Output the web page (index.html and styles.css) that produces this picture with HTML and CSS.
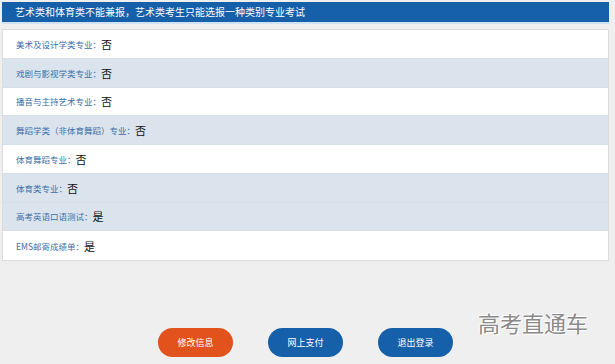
FILE: index.html
```html
<!DOCTYPE html>
<html lang="zh-CN">
<head>
    <meta charset="UTF-8">
    <meta name="viewport" content="width=device-width, initial-scale=1.0">
    <title>报考信息确认</title>
    <link rel="stylesheet" href="styles.css">
</head>
<body>
    <div class="notice">艺术类和体育类不能兼报，艺术类考生只能选报一种类别专业考试</div>

    <ul class="info-list">
        <li class="row"><span class="label">美术及设计学类专业：</span><span class="value">否</span></li>
        <li class="row alt"><span class="label">戏剧与影视学类专业：</span><span class="value">否</span></li>
        <li class="row"><span class="label">播音与主持艺术专业：</span><span class="value">否</span></li>
        <li class="row alt"><span class="label">舞蹈学类（非体育舞蹈）专业：</span><span class="value">否</span></li>
        <li class="row"><span class="label">体育舞蹈专业：</span><span class="value">否</span></li>
        <li class="row alt"><span class="label">体育类专业：</span><span class="value">否</span></li>
        <li class="row alt"><span class="label">高考英语口语测试：</span><span class="value">是</span></li>
        <li class="row"><span class="label">EMS邮寄成绩单：</span><span class="value">是</span></li>
    </ul>

    <div class="actions">
        <button class="button orange">修改信息</button>
        <button class="button">网上支付</button>
        <button class="button">退出登录</button>
    </div>

    <div class="watermark">高考直通车</div>
</body>
</html>
```

FILE: styles.css
```css
body {
    font-family: "Noto Sans CJK SC", "Noto Sans", sans-serif;
    margin: 0;
    padding: 2px 6px 0 2px;
    background-color: #efefef;
    color: #222;
    height: 362px;
    position: relative;
    overflow: hidden;
}
.notice {
    background-color: #1660a9;
    color: #fff;
    font-size: 10px;
    height: 20px;
    line-height: 20px;
    padding-left: 13px;
    border-bottom: 2px solid #cfe3f4;
}
.info-list {
    list-style: none;
    margin: 5px 0 0;
    padding: 0;
    background-color: #fff;
    border: 1px solid #dcdcdc;
}
.row {
    height: 28.75px;
    display: flex;
    align-items: center;
    padding-left: 13px;
    border-bottom: 1px solid #d6dfe8;
    box-sizing: border-box;
}
.row:last-child {
    border-bottom: none;
}
.row.alt {
    background-color: #dbe4ed;
}
.label {
    font-size: 8.5px;
    color: #3b6fa8;
}
.value {
    font-size: 11px;
    color: #111;
}
.actions {
    display: flex;
    justify-content: center;
    gap: 35px;
    margin-top: 67px;
}
.button {
    width: 75px;
    height: 29px;
    border: none;
    border-radius: 15px;
    background-color: #1660a9;
    color: #fff;
    font-family: inherit;
    font-size: 9px;
    cursor: pointer;
}
.button.orange {
    background-color: #e2521c;
}
.watermark {
    position: absolute;
    left: 478px;
    top: 306px;
    font-size: 22px;
    color: #8a8a8a;
    text-shadow: 1px 1px 0 #fff, -1px -1px 0 #fff;
}
```
